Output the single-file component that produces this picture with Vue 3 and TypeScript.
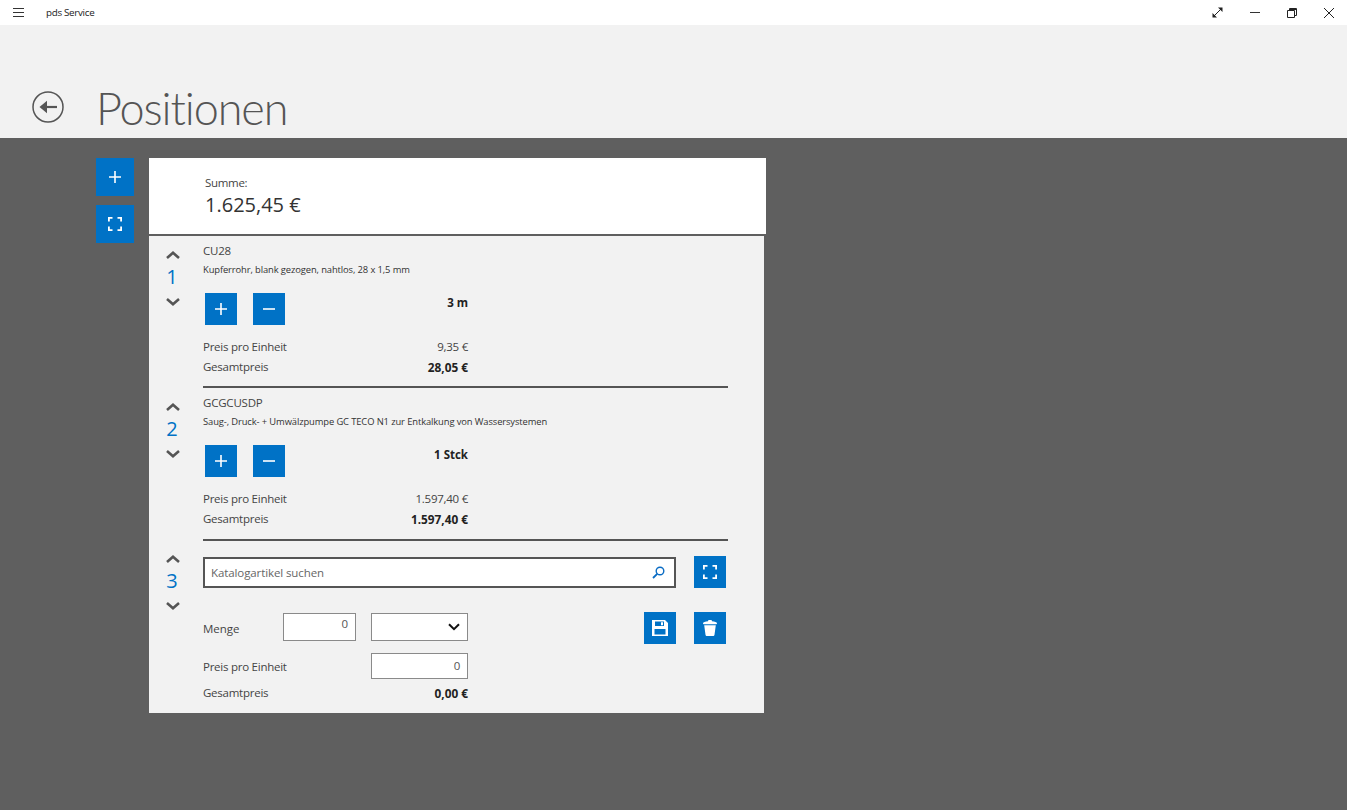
<template>
  <div class="app">
    <div class="titlebar">
      <div class="title-left">
        <svg class="burger" width="11" height="9" viewBox="0 0 11 9"><path d="M0 .5h11M0 4.500h11M0 8.500h11" stroke="#333" fill="none" /></svg>
        <span class="app-name">pds Service</span>
      </div>
      <div class="win-buttons">
        <span class="win-btn"><svg width="11" height="11" viewBox="0 0 11 11"><path d="M2 9 9 2" stroke="#222" fill="none" /><path d="M6 .5h4.500V5zM.5 6v4.500H5z" fill="#222" /></svg></span>
        <span class="win-btn"><svg width="10" height="11" viewBox="0 0 10 11"><path d="M0 5.500h10" stroke="#333" fill="none" /></svg></span>
        <span class="win-btn"><svg width="10" height="10" viewBox="0 0 10 10"><path d="M.5 2.500h7v7h-7zM2.500 2.500v-2h7v7h-2" stroke="#222" fill="none" /><path d="M2.500 1.500h7" stroke="#222" fill="none" /></svg></span>
        <span class="win-btn"><svg width="10" height="10" viewBox="0 0 10 10"><path d="M0 0 10 10M10 0 0 10" stroke="#222" fill="none" /></svg></span>
      </div>
    </div>

    <header class="page-head">
      <svg class="back" width="32" height="32" viewBox="0 0 32 32">
        <circle cx="16" cy="16" r="15" fill="none" stroke="#555" stroke-width="1.500" />
        <path d="M25 16H10" fill="none" stroke="#555" stroke-width="2.200" />
        <path d="M7.500 16 15 9.800v12.400z" fill="#555" />
      </svg>
      <h1>Positionen</h1>
    </header>

    <main class="content">
      <div class="side-actions">
        <button class="btn big"><svg width="14" height="14" viewBox="0 0 14 14"><path d="M7 1v12M1 7h12" stroke="#fff" stroke-width="1.600" fill="none" /></svg></button>
        <button class="btn big"><svg width="14" height="14" viewBox="0 0 14 14"><path d="M.9 4.500V.9h3.600M9.500.9h3.600v3.600M13.100 9.500v3.600H9.500M4.500 13.100H.9V9.500" stroke="#fff" stroke-width="1.800" fill="none" /></svg></button>
      </div>

      <div class="panel">
        <section class="summary">
          <div class="sum-label">Summe:</div>
          <div class="sum-value">1.625,45 €</div>
        </section>

        <section class="list">
          <article v-for="(p, i) in positions" :key="p.code" class="row">
            <div class="order">
              <svg class="chev" width="14" height="8" viewBox="0 0 14 8"><path d="M1 7l6-5.200L13 7" fill="none" stroke="#555" stroke-width="2.600" /></svg>
              <span class="num">{{ i + 1 }}</span>
              <svg class="chev" width="14" height="8" viewBox="0 0 14 8"><path d="M1 1l6 5.200L13 1" fill="none" stroke="#555" stroke-width="2.600" /></svg>
            </div>
            <div class="body">
              <div class="code">{{ p.code }}</div>
              <div class="desc">{{ p.desc }}</div>
              <div class="qty-row">
                <button class="btn small"><svg width="12" height="12" viewBox="0 0 12 12"><path d="M6 0v12M0 6h12" stroke="#fff" stroke-width="1.600" fill="none" /></svg></button>
                <button class="btn small"><svg width="12" height="12" viewBox="0 0 12 12"><path d="M0 6h12" stroke="#fff" stroke-width="1.600" fill="none" /></svg></button>
                <strong class="qty">{{ p.qty }}</strong>
              </div>
              <div class="price-line first"><span>Preis pro Einheit</span><span>{{ p.unit }}</span></div>
              <div class="price-line"><span>Gesamtpreis</span><strong>{{ p.total }}</strong></div>
            </div>
          </article>

          <article class="row last">
            <div class="order">
              <svg class="chev" width="14" height="8" viewBox="0 0 14 8"><path d="M1 7l6-5.200L13 7" fill="none" stroke="#555" stroke-width="2.600" /></svg>
              <span class="num">3</span>
              <svg class="chev" width="14" height="8" viewBox="0 0 14 8"><path d="M1 1l6 5.200L13 1" fill="none" stroke="#555" stroke-width="2.600" /></svg>
            </div>
            <div class="body">
              <div class="search-row">
                <div class="search">
                  <span>Katalogartikel suchen</span>
                  <svg width="13" height="13" viewBox="0 0 13 13"><circle cx="8" cy="5" r="3.800" fill="none" stroke="#0a6cc4" stroke-width="1.400" /><path d="M5.200 7.800 1 12" stroke="#0a6cc4" stroke-width="1.800" fill="none" /></svg>
                </div>
                <button class="btn small"><svg width="14" height="14" viewBox="0 0 14 14"><path d="M.9 4.500V.9h3.600M9.500.9h3.600v3.600M13.100 9.500v3.600H9.500M4.500 13.100H.9V9.500" stroke="#fff" stroke-width="1.800" fill="none" /></svg></button>
              </div>
              <div class="edit-row">
                <div class="edit-fields">
                  <span class="menge">Menge</span>
                  <div class="field qty-field">0</div>
                  <div class="field unit-field">
                    <svg width="12" height="8" viewBox="0 0 12 8"><path d="M1 1.200l5 5 5-5" fill="none" stroke="#111" stroke-width="2" /></svg>
                  </div>
                </div>
                <div class="edit-actions">
                  <button class="btn small"><svg width="16" height="16" viewBox="0 0 16 16"><path fill="#fff" fill-rule="evenodd" d="M0 0h13l3 3v13H0zM3 1.500V6h9V1.500zM9 2.300h2v2.900H9zM2.500 9v5.500h11V9z" /></svg></button>
                  <button class="btn small"><svg width="14" height="16" viewBox="0 0 14 16"><path fill="#fff" d="M5 1.300C5 .5 5.500 0 6.300 0h1.400C8.500 0 9 .5 9 1.300c2.600.2 5 .8 5 2 0 .6-.5 1-1 1H1c-.5 0-1-.4-1-1 0-1.200 2.400-1.800 5-2zM1.200 5.300h11.600l-1.300 9.400c-.1.800-.7 1.300-1.500 1.300H4c-.8 0-1.400-.5-1.500-1.300z" /></svg></button>
                </div>
              </div>
              <div class="price-edit">
                <span>Preis pro Einheit</span>
                <div class="field price-field">0</div>
              </div>
              <div class="price-line total-new"><span>Gesamtpreis</span><strong>0,00 €</strong></div>
            </div>
          </article>
        </section>
      </div>
    </main>
  </div>
</template>

<script setup lang="ts">
interface Position {
  code: string
  desc: string
  qty: string
  unit: string
  total: string
}

const positions: Position[] = [
  {
    code: "CU28",
    desc: "Kupferrohr, blank gezogen, nahtlos, 28 x 1,5 mm",
    qty: "3 m",
    unit: "9,35 €",
    total: "28,05 €",
  },
  {
    code: "GCGCUSDP",
    desc: "Saug-, Druck- + Umwälzpumpe GC TECO N1 zur Entkalkung von Wassersystemen",
    qty: "1 Stck",
    unit: "1.597,40 €",
    total: "1.597,40 €",
  },
]
</script>

<style>
html,
body {
  margin: 0;
  background: #5f5f5f;
}
</style>

<style scoped>
.app {
  width: 1347px;
  height: 810px;
  display: flex;
  flex-direction: column;
  overflow: hidden;
  font-family: "Open Sans", "Noto Sans", sans-serif;
  color: #444;
}

/* window chrome */

.titlebar {
  height: 25px;
  background: #fff;
  display: flex;
  justify-content: space-between;
  align-items: center;
}

.title-left {
  display: flex;
  align-items: center;
  padding-left: 13px;
}

.burger {
  margin-right: 22px;
}

.app-name {
  font-size: 9.800px;
  letter-spacing: -0.3px;
  color: #222;
}

.win-buttons {
  display: flex;
  align-items: center;
}

.win-btn {
  width: 37px;
  display: flex;
  justify-content: center;
}

.page-head {
  height: 113px;
  background: #f2f2f2;
  display: flex;
  align-items: flex-end;
  padding-left: 32px;
  box-sizing: border-box;
}

.back {
  margin-bottom: 15px;
}

h1 {
  margin: 0 0 0 32px;
  font-family: "Lato", "Open Sans", sans-serif;
  font-size: 45px;
  font-weight: 300;
  letter-spacing: -1.100px;
  line-height: 60px;
  color: #555;
}

.content {
  flex: 1;
  background: #5f5f5f;
  display: flex;
  align-items: flex-start;
  padding: 20px 0 0 96px;
}

.side-actions {
  display: flex;
  flex-direction: column;
  gap: 9px;
  margin-right: 15px;
}

.btn {
  border: 0;
  padding: 0;
  background: #0072c6;
  display: flex;
  align-items: center;
  justify-content: center;
}

.btn.big {
  width: 38px;
  height: 38px;
}

.btn.small {
  width: 32px;
  height: 32px;
}

.panel {
  width: 617px;
}

.summary {
  background: #fff;
  padding: 17px 0 0 56px;
  box-sizing: border-box;
  border-bottom: 2px solid #5f5f5f;
  height: 78px;
}

.sum-label {
  font-size: 11.500px;
  letter-spacing: -0.3px;
  line-height: 16px;
  color: #444;
}

.sum-value {
  font-size: 20px;
  line-height: 28px;
  color: #333;
}

.list {
  width: 615px;
  height: 477px;
  background: #f2f2f2;
}

.row {
  height: 152px;
  display: flex;
  box-sizing: border-box;
}

.row:nth-child(2) {
  height: 153px;
}

.order {
  width: 54px;
  padding: 15px 0 0 17px;
  box-sizing: border-box;
  display: flex;
  flex-direction: column;
  align-items: flex-start;
}

.chev {
  display: block;
}

.num {
  width: 14px;
  text-align: center;
  font-size: 20px;
  line-height: 30px;
  margin: 3px 0 6px -1px;
  color: #0072c6;
}

.body {
  width: 525px;
  box-sizing: border-box;
  height: 100%;
  border-bottom: 2px solid #555;
  padding-top: 6px;
}

.row.last .body {
  border-bottom: 0;
  padding-top: 15px;
}

.row.last .order {
  padding-top: 15px;
  margin-top: -1px;
}

.code {
  font-size: 11.500px;
  letter-spacing: -0.2px;
  line-height: 18px;
}

.desc {
  font-size: 9.400px;
  letter-spacing: -0.11px;
  line-height: 14px;
  margin-top: 3px;
  color: #333;
}

.qty-row {
  display: flex;
  gap: 16px;
  margin: 16px 0 0 2px;
  width: 263px;
  height: 32px;
}

.qty {
  margin-left: auto;
  font-size: 11.500px;
  line-height: 19px;
  color: #222;
}

.price-line {
  width: 265px;
  display: flex;
  justify-content: space-between;
  font-size: 11.500px;
  letter-spacing: -0.25px;
  line-height: 20px;
}

.price-line.first {
  margin-top: 12px;
}

.price-line strong {
  font-size: 11.800px;
  letter-spacing: 0;
  color: #222;
}

.search-row {
  display: flex;
  justify-content: space-between;
  align-items: flex-end;
  width: 523px;
}

.search {
  width: 473px;
  height: 31px;
  box-sizing: border-box;
  border: 2px solid #555;
  background: #fff;
  display: flex;
  justify-content: space-between;
  align-items: center;
  padding: 0 9px 0 6px;
  font-size: 11.500px;
  letter-spacing: -0.1px;
  color: #666;
}

.edit-row {
  display: flex;
  justify-content: space-between;
  width: 523px;
  margin-top: 24px;
}

.edit-fields {
  display: flex;
  align-items: center;
  height: 30px;
}

.menge {
  width: 80px;
  font-size: 11.500px;
  padding-top: 2px;
}

.field {
  box-sizing: border-box;
  background: #fff;
  border: 1px solid #8a8a8a;
  font-size: 11.500px;
  color: #555;
  text-align: right;
}

.qty-field {
  width: 73px;
  height: 28px;
  padding: 2px 7px 0 0;
  margin-right: 15px;
}

.unit-field {
  width: 97px;
  height: 28px;
  display: flex;
  align-items: center;
  justify-content: flex-end;
  padding-right: 7px;
}

.edit-actions {
  display: flex;
  gap: 18px;
}

.price-edit {
  width: 265px;
  display: flex;
  justify-content: space-between;
  align-items: center;
  font-size: 11.500px;
  letter-spacing: -0.25px;
  margin-top: 9px;
}

.price-field {
  width: 97px;
  height: 26px;
  line-height: 24px;
  padding-right: 7px;
}

.total-new {
  margin-top: 4px;
}
</style>
